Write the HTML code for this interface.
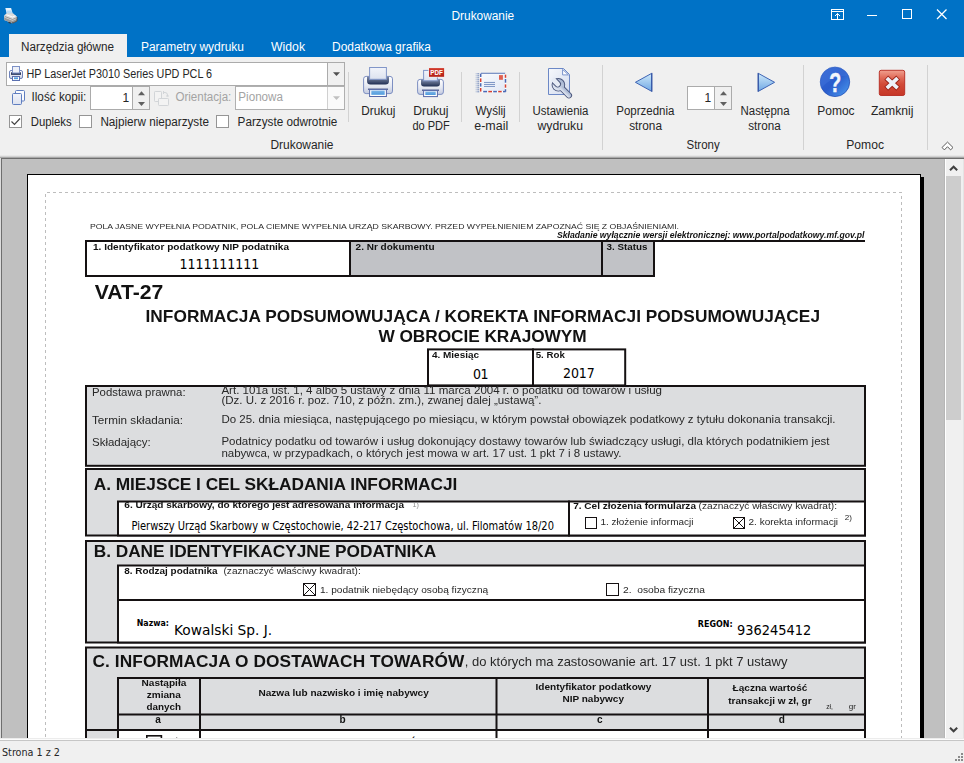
<!DOCTYPE html>
<html lang="pl"><head><meta charset="utf-8"><title>Drukowanie</title>
<style>
html,body{margin:0;padding:0;background:#f0f0f0;overflow:hidden}
svg{display:block}
text{font-family:"Liberation Sans",sans-serif;white-space:pre}
.ui{font-family:"Liberation Sans",sans-serif}
.th{font-family:"DejaVu Sans Condensed","DejaVu Sans","Liberation Sans",sans-serif}
.doc text:not(.th){filter:url(#gs)}
.b{font-weight:bold}
.bi{font-weight:bold;font-style:italic}
</style></head><body>
<svg width="964" height="763" viewBox="0 0 964 763">
<defs><clipPath id="pv"><rect x="2" y="159" width="943" height="579"/></clipPath>

<linearGradient id="gBody" x1="0" y1="0" x2="0" y2="1"><stop offset="0" stop-color="#ffffff"/><stop offset="0.55" stop-color="#e6e9f2"/><stop offset="1" stop-color="#c3cadf"/></linearGradient>
<linearGradient id="gSlot" x1="0" y1="0" x2="0" y2="1"><stop offset="0" stop-color="#7e8bab"/><stop offset="0.6" stop-color="#4b5878"/><stop offset="1" stop-color="#1f2d52"/></linearGradient>
<linearGradient id="gPaper" x1="0" y1="0" x2="0" y2="1"><stop offset="0" stop-color="#f2f4fa"/><stop offset="1" stop-color="#dde2ef"/></linearGradient>
<linearGradient id="gTray" x1="0" y1="0" x2="0" y2="1"><stop offset="0" stop-color="#7bb4e6"/><stop offset="1" stop-color="#4f9bdc"/></linearGradient>
<linearGradient id="gPdf" x1="0" y1="0" x2="0" y2="1"><stop offset="0" stop-color="#d23a2c"/><stop offset="1" stop-color="#b42016"/></linearGradient>
<linearGradient id="gArr" x1="0" y1="0" x2="0" y2="1"><stop offset="0" stop-color="#cfe9fa"/><stop offset="1" stop-color="#6fa8e4"/></linearGradient>
<linearGradient id="gPage" x1="0" y1="0" x2="1" y2="1"><stop offset="0" stop-color="#f6f8fc"/><stop offset="1" stop-color="#d3dbee"/></linearGradient>
<linearGradient id="gClose" x1="0" y1="0" x2="0" y2="1"><stop offset="0" stop-color="#f0a090"/><stop offset="0.3" stop-color="#e06a58"/><stop offset="0.55" stop-color="#d24a38"/><stop offset="1" stop-color="#c63626"/></linearGradient>
<linearGradient id="gHelp" x1="0" y1="0" x2="1" y2="1"><stop offset="0" stop-color="#3466d4"/><stop offset="0.5" stop-color="#2a5ccc"/><stop offset="0.8" stop-color="#3f84e2"/><stop offset="1" stop-color="#5aa4f2"/></linearGradient>
<linearGradient id="gWr" x1="0" y1="0" x2="1" y2="0"><stop offset="0" stop-color="#e4e9f3"/><stop offset="1" stop-color="#a4b3cf"/></linearGradient>
<linearGradient id="gSpeed" x1="0" y1="0" x2="1" y2="0"><stop offset="0" stop-color="#6c86bc" stop-opacity="0"/><stop offset="1" stop-color="#5470ac"/></linearGradient>
<linearGradient id="gEnv" x1="0" y1="0" x2="1" y2="1"><stop offset="0" stop-color="#f8fafd"/><stop offset="1" stop-color="#e2e8f5"/></linearGradient>
<clipPath id="wrHead"><circle cx="0" cy="0" r="6.8"/></clipPath>

<filter id="gs" x="-5%" y="-20%" width="110%" height="140%" color-interpolation-filters="sRGB"><feColorMatrix type="saturate" values="0"/></filter>
</defs>
<rect x="0" y="0" width="964" height="763" fill="#f0f0f0" />
<rect x="0" y="0" width="964" height="57" fill="#0072c6" />
<rect x="9" y="34" width="118" height="24" fill="#f0f0f0" />
<text x="451.5" y="20" font-size="12" textLength="62.7" lengthAdjust="spacingAndGlyphs" class="ui" fill="#fff" >Drukowanie</text>
<text x="21" y="51.3" font-size="12" textLength="93" lengthAdjust="spacingAndGlyphs" class="ui" fill="#262626" >Narzędzia główne</text>
<text x="141" y="51.3" font-size="12" textLength="103" lengthAdjust="spacingAndGlyphs" class="ui" fill="#fff" >Parametry wydruku</text>
<text x="271" y="51.3" font-size="12" textLength="34" lengthAdjust="spacingAndGlyphs" class="ui" fill="#fff" >Widok</text>
<text x="332" y="51.3" font-size="12" textLength="99" lengthAdjust="spacingAndGlyphs" class="ui" fill="#fff" >Dodatkowa grafika</text>
<g fill="none" stroke="#fff" stroke-width="1"><rect x="831.5" y="9.5" width="12" height="10"/><line x1="831" y1="11.5" x2="844" y2="11.5"/><path d="M837.5 19V13.5M835 16l2.5-2.5 2.5 2.5"/><line x1="867" y1="15.5" x2="877" y2="15.5"/><rect x="902.5" y="9.5" width="9" height="9"/><path d="M937 9.5l9.5 9.5M946.5 9.5L937 19" stroke-width="1.3"/></g>
<rect x="6.5" y="62.5" width="338" height="23" fill="#fff" stroke="#ababab"/>
<rect x="328" y="63" width="16" height="22" fill="#f0f0f0" />
<line x1="327.5" y1="63" x2="327.5" y2="85" stroke="#ababab" stroke-width="1" />
<path d="M333 72.2h7l-3.5 3.8z" fill="#505050"/>
<text x="26.5" y="77.5" font-size="12" textLength="185.5" lengthAdjust="spacingAndGlyphs" class="ui" fill="#262626" >HP LaserJet P3010 Series UPD PCL 6</text>
<text x="31.5" y="101.4" font-size="12" textLength="54.8" lengthAdjust="spacingAndGlyphs" class="ui" fill="#262626" >Ilość kopii:</text>
<rect x="90.5" y="86.5" width="59" height="23" fill="#fff" stroke="#ababab"/>
<rect x="133" y="87" width="16" height="22" fill="#f0f0f0" />
<line x1="132.5" y1="87" x2="132.5" y2="109" stroke="#ababab" stroke-width="1" />
<text x="129.3" y="102.2" font-size="12" class="ui" fill="#262626" text-anchor="end" >1</text>
<path d="M138 95.2h7l-3.5-4zM138 102h7l-3.5 4z" fill="#606060"/>
<text x="175.4" y="101.4" font-size="12" textLength="55.9" lengthAdjust="spacingAndGlyphs" class="ui" fill="#a3a3a3" >Orientacja:</text>
<rect x="235.5" y="86.5" width="109" height="23" fill="#fff" stroke="#b0b0b0"/>
<rect x="328" y="87" width="16" height="22" fill="#fafafa" />
<line x1="327.5" y1="87" x2="327.5" y2="109" stroke="#d0d0d0" stroke-width="1" />
<path d="M333 96.2h7l-3.5 3.8z" fill="#c0c0c0"/>
<text x="238.3" y="101.4" font-size="12" textLength="44.7" lengthAdjust="spacingAndGlyphs" class="ui" fill="#a3a3a3" >Pionowa</text>
<rect x="9.5" y="115.5" width="12" height="12" fill="#fff" stroke="#959595"/>
<path d="M11.5 121.5l3 3 5.5-6" fill="none" stroke="#444" stroke-width="1.2"/>
<text x="30.7" y="126.3" font-size="12" textLength="41.0" lengthAdjust="spacingAndGlyphs" class="ui" fill="#262626" >Dupleks</text>
<rect x="79.5" y="115.5" width="12" height="12" fill="#fff" stroke="#959595"/>
<text x="100.4" y="126.3" font-size="12" textLength="108.6" lengthAdjust="spacingAndGlyphs" class="ui" fill="#262626" >Najpierw nieparzyste</text>
<rect x="216.5" y="115.5" width="12" height="12" fill="#fff" stroke="#959595"/>
<text x="237.6" y="126.3" font-size="12" textLength="99.7" lengthAdjust="spacingAndGlyphs" class="ui" fill="#262626" >Parzyste odwrotnie</text>
<text x="270.5" y="149" font-size="12" textLength="63.0" lengthAdjust="spacingAndGlyphs" class="ui" fill="#262626" >Drukowanie</text>
<line x1="348.5" y1="72" x2="348.5" y2="122" stroke="#d2d2d2" stroke-width="1" />
<line x1="461.5" y1="72" x2="461.5" y2="122" stroke="#d2d2d2" stroke-width="1" />
<line x1="519.5" y1="72" x2="519.5" y2="122" stroke="#d2d2d2" stroke-width="1" />
<line x1="602.5" y1="65" x2="602.5" y2="150" stroke="#d2d2d2" stroke-width="1" />
<line x1="803.5" y1="65" x2="803.5" y2="150" stroke="#d2d2d2" stroke-width="1" />
<line x1="927.5" y1="65" x2="927.5" y2="150" stroke="#d2d2d2" stroke-width="1" />
<text x="361.3" y="115.4" font-size="12" textLength="34.0" lengthAdjust="spacingAndGlyphs" class="ui" fill="#262626" >Drukuj</text>
<text x="413.3" y="115.4" font-size="12" textLength="35.2" lengthAdjust="spacingAndGlyphs" class="ui" fill="#262626" >Drukuj</text>
<text x="412.4" y="130" font-size="12" textLength="37.4" lengthAdjust="spacingAndGlyphs" class="ui" fill="#262626" >do PDF</text>
<text x="475.5" y="115.4" font-size="12" textLength="30.2" lengthAdjust="spacingAndGlyphs" class="ui" fill="#262626" >Wyślij</text>
<text x="474.3" y="130" font-size="12" textLength="33.9" lengthAdjust="spacingAndGlyphs" class="ui" fill="#262626" >e-mail</text>
<text x="532.5" y="115.4" font-size="12" textLength="55.9" lengthAdjust="spacingAndGlyphs" class="ui" fill="#262626" >Ustawienia</text>
<text x="537.5" y="130" font-size="12" textLength="45.5" lengthAdjust="spacingAndGlyphs" class="ui" fill="#262626" >wydruku</text>
<text x="616.3" y="115.4" font-size="12" textLength="58.1" lengthAdjust="spacingAndGlyphs" class="ui" fill="#262626" >Poprzednia</text>
<text x="629.2" y="130" font-size="12" textLength="32.8" lengthAdjust="spacingAndGlyphs" class="ui" fill="#262626" >strona</text>
<text x="740.5" y="115.4" font-size="12" textLength="49.0" lengthAdjust="spacingAndGlyphs" class="ui" fill="#262626" >Następna</text>
<text x="748.3" y="130" font-size="12" textLength="32.4" lengthAdjust="spacingAndGlyphs" class="ui" fill="#262626" >strona</text>
<text x="686.5" y="149" font-size="12" textLength="33.2" lengthAdjust="spacingAndGlyphs" class="ui" fill="#262626" >Strony</text>
<text x="817.3" y="115.4" font-size="12" textLength="37.3" lengthAdjust="spacingAndGlyphs" class="ui" fill="#262626" >Pomoc</text>
<text x="870.9" y="115.4" font-size="12" textLength="42.6" lengthAdjust="spacingAndGlyphs" class="ui" fill="#262626" >Zamknij</text>
<text x="846.3" y="149" font-size="12" textLength="37.7" lengthAdjust="spacingAndGlyphs" class="ui" fill="#262626" >Pomoc</text>
<rect x="687.5" y="86.5" width="44" height="23" fill="#fff" stroke="#ababab"/>
<rect x="715" y="87" width="16" height="22" fill="#f0f0f0" />
<line x1="714.5" y1="87" x2="714.5" y2="109" stroke="#ababab" stroke-width="1" />
<text x="711.3" y="102.2" font-size="12" class="ui" fill="#262626" text-anchor="end" >1</text>
<path d="M720 95.2h7l-3.5-4zM720 102h7l-3.5 4z" fill="#606060"/>
<path d="M947.5 142.1L953 147.5L950.6 149.9L947.5 146.7L944.4 149.9L942 147.5Z" fill="#fff" stroke="#5c5c5c" stroke-width="1" stroke-linejoin="round"/>
<g><path d="M5.3 8h5.8l1.6 5.6h-6z" fill="#e8f3fc"/><path d="M6.2 10.5h5.3l0.9 3.1h-5.4z" fill="#b4daf6"/><path d="M4.2 15.5l2.3-2.3h6.5l4 3.5v4.3l-4.5 2.2l-8.3-3.3z" fill="#dcdcdc"/><path d="M4.2 17.5l8.3 3.2l4.5-2v2.3l-4.5 2.2l-8.3-3.3z" fill="#9a9a9a"/><path d="M6.5 14.8l6 2.2l3-1.3" fill="none" stroke="#fff" stroke-width="0.9"/><path d="M17 17v4l-4.5 2.2v-0.8" fill="none" stroke="#4a4a4a" stroke-width="0.9"/><path d="M8.5 22.3l2.5 1" stroke="#3a3a3a" stroke-width="1.2"/><path d="M5 16.6l7.6 2.9l4-1.8" fill="none" stroke="#8c8c8c" stroke-width="0.9"/></g>
<g><rect x="9.5" y="70.5" width="13" height="8" rx="1.5" fill="url(#gBody)" stroke="#6f83bb"/><rect x="11" y="72.3" width="10" height="2.6" fill="#2f3c62"/><rect x="12.5" y="66.5" width="7" height="6.5" fill="#eef1f8" stroke="#7d91c6"/><rect x="12.5" y="76.5" width="7" height="4" fill="#fff" stroke="#5b70b0"/><rect x="14" y="77.4" width="4" height="1.8" fill="#4f9bdc"/></g>
<g><rect x="15.5" y="90.5" width="9" height="10.5" rx="1" fill="#fbfcfe" stroke="#5f7ec0"/><rect x="12.5" y="93.5" width="9" height="11" rx="1" fill="url(#gPaper)" stroke="#5f7ec0"/></g>
<g fill="#f3f3f3" stroke="#d2d5d8"><rect x="154.5" y="91.5" width="7" height="10" rx="0.8"/><rect x="158.5" y="98.5" width="10" height="7" rx="0.8"/><path d="M163.5 92.5h1.5a2.5 2.5 0 0 1 2.5 2.5v1.5M163.5 91v3M166 96h3" fill="none"/></g>
<g transform="translate(362,66)">
<rect x="1.6" y="10.4" width="28.9" height="17.2" rx="2.5" fill="url(#gBody)" stroke="#7d8fc2" stroke-width="1"/>
<path d="M5 10.4h22v4.6a3.5 3.5 0 0 1 -3.5 3.5h-15a3.5 3.5 0 0 1 -3.5 -3.5z" fill="url(#gSlot)"/>
<rect x="7.6" y="1.5" width="16.8" height="11.8" fill="url(#gPaper)" stroke="#8296c8" stroke-width="1"/>
<rect x="6" y="22.6" width="20" height="1.2" fill="#3e4c80"/>
<rect x="7.6" y="23.6" width="16.8" height="6.9" fill="#fff" stroke="#5668a8" stroke-width="1"/>
<rect x="9.3" y="24.6" width="13.4" height="4.2" fill="url(#gTray)"/>
</g>
<g transform="translate(416,66)">
<rect x="1.6" y="13.4" width="25.8" height="15" rx="2.5" fill="url(#gBody)" stroke="#7d8fc2" stroke-width="1"/>
<path d="M5 13.4h19v4a3 3 0 0 1 -3 3h-13a3 3 0 0 1 -3 -3z" fill="url(#gSlot)"/>
<rect x="7.6" y="4.4" width="13.8" height="10.4" fill="url(#gPaper)" stroke="#8296c8" stroke-width="1"/>
<rect x="6" y="23.6" width="17" height="1.2" fill="#3e4c80"/>
<rect x="7.6" y="24.6" width="13.8" height="6" fill="#fff" stroke="#5668a8" stroke-width="1"/>
<rect x="9.3" y="25.6" width="10.4" height="3.4" fill="url(#gTray)"/>
<rect x="12.4" y="1.6" width="16.2" height="9.8" fill="#f6ece8"/>
<rect x="13" y="2.1" width="15.1" height="8.7" fill="url(#gPdf)"/>
<text x="14.2" y="9.1" font-size="6.6" class="b" fill="#fff" textLength="12.6" lengthAdjust="spacingAndGlyphs">PDF</text>
</g>
<g>
<rect x="474.6" y="73.3" width="4.6" height="1" fill="url(#gSpeed)"/>
<rect x="474.6" y="75.3" width="4.6" height="1" fill="url(#gSpeed)"/>
<rect x="474.6" y="77.3" width="4.6" height="1" fill="url(#gSpeed)"/>
<rect x="474.6" y="79.3" width="4.6" height="1" fill="url(#gSpeed)"/>
<rect x="474.6" y="81.3" width="4.6" height="1" fill="url(#gSpeed)"/>
<rect x="474.6" y="83.3" width="4.6" height="1" fill="url(#gSpeed)"/>
<rect x="474.6" y="85.3" width="4.6" height="1" fill="url(#gSpeed)"/>
<rect x="474.6" y="87.3" width="4.6" height="1" fill="url(#gSpeed)"/>
<rect x="474.6" y="89.3" width="4.6" height="1" fill="url(#gSpeed)"/>
<rect x="474.6" y="91.3" width="4.6" height="1" fill="url(#gSpeed)"/>
<rect x="480.6" y="73.5" width="25" height="18.2" rx="1.2" fill="url(#gEnv)" stroke="#ffffff" stroke-width="1.5"/>
<path d="M481 73.3h24.2" stroke="#6f88c0" stroke-width="1.2"/>
<line x1="480.7" y1="73.6" x2="480.7" y2="77" stroke="#4a68b4" stroke-width="1.5"/>
<line x1="480.7" y1="78.4" x2="480.7" y2="82" stroke="#d8402f" stroke-width="1.5"/>
<line x1="480.7" y1="83.2" x2="480.7" y2="86.6" stroke="#4a68b4" stroke-width="1.5"/>
<line x1="480.7" y1="88" x2="480.7" y2="91.6" stroke="#d8402f" stroke-width="1.5"/>
<line x1="505.5" y1="74.6" x2="505.5" y2="77.8" stroke="#d8402f" stroke-width="1.5"/>
<line x1="505.5" y1="78.9" x2="505.5" y2="82.7" stroke="#4a68b4" stroke-width="1.5"/>
<line x1="505.5" y1="84.4" x2="505.5" y2="87.7" stroke="#d8402f" stroke-width="1.5"/>
<line x1="505.5" y1="89.2" x2="505.5" y2="91.8" stroke="#4a68b4" stroke-width="1.5"/>
<line x1="483.2" y1="91.6" x2="487.1" y2="91.6" stroke="#4a68b4" stroke-width="1.5"/>
<line x1="488.3" y1="91.6" x2="492" y2="91.6" stroke="#d8402f" stroke-width="1.5"/>
<line x1="493.2" y1="91.6" x2="496.9" y2="91.6" stroke="#4a68b4" stroke-width="1.5"/>
<line x1="498.2" y1="91.6" x2="501.7" y2="91.6" stroke="#d8402f" stroke-width="1.5"/>
<line x1="503" y1="91.6" x2="505.6" y2="91.6" stroke="#4a68b4" stroke-width="1.5"/>
<rect x="499" y="75.1" width="3.9" height="4.7" fill="#e06050"/>
<rect x="484" y="81.95" width="11" height="0.9" fill="#6f8abf"/>
<rect x="484" y="83.95" width="11" height="0.9" fill="#6f8abf"/>
<rect x="484" y="85.95" width="11" height="0.9" fill="#6f8abf"/>
</g>
<g><path d="M548.5 68.5h15l6 6v20h-21z" fill="url(#gPage)" stroke="#6c88c6" stroke-width="1"/><path d="M562.6 69.4v5.5h5.8z" fill="#fff" stroke="#6c88c6" stroke-width="0.9"/><g transform="translate(558.4,84.8) rotate(-45)"><rect x="-3.1" y="2" width="6.2" height="16" rx="3.1" fill="#48547a"/><circle cx="0" cy="0" r="6.8" fill="#48547a"/><circle cx="0" cy="0" r="5.9" fill="url(#gWr)"/><rect x="-2.2" y="3" width="4.4" height="14.1" rx="2.2" fill="url(#gWr)"/><g clip-path="url(#wrHead)"><path d="M-3.3 -8v7a3.3 3.3 0 0 0 6.6 0v-7z" fill="#48547a"/></g><path d="M-2.4 -8.5v7.5a2.4 2.4 0 0 0 4.8 0v-7.5z" fill="#e6ebf5"/></g></g>
<path d="M635.4 82.3L651.6 73.4V91.3z" fill="url(#gArr)" stroke="#3d63b4" stroke-width="1" stroke-linejoin="round"/>
<path d="M651.9 72.9V91.8" stroke="#2e4fa0" stroke-width="1"/>
<path d="M774.6 82.3L758.4 73.4V91.3z" fill="url(#gArr)" stroke="#3d63b4" stroke-width="1" stroke-linejoin="round"/>
<path d="M758.1 72.9V91.8" stroke="#2e4fa0" stroke-width="1"/>
<circle cx="835" cy="81.9" r="14.7" fill="url(#gHelp)" stroke="#2450b8" stroke-width="0.8"/>
<path d="M821.2 88a15 15 0 0 1 27.6-12.4c-10 0-20 4-27.6 12.4z" fill="#4a7ee0" opacity="0.35"/>
<text x="829.2" y="92.2" font-size="28.5" class="b" fill="#f4f6fb" stroke="#f4f6fb" stroke-width="0.5" textLength="12" lengthAdjust="spacingAndGlyphs">?</text>
<rect x="879.3" y="70.3" width="25.4" height="25.2" rx="1.8" fill="url(#gClose)" stroke="#b62a20" stroke-width="0.9"/>
<path d="M886.2 77.6L898.2 88.8M898.2 77.6L886.2 88.8" stroke="#9c2218" stroke-width="5.6" stroke-linecap="butt" fill="none"/>
<path d="M886.8 78.2L897.6 88.2M897.6 78.2L886.8 88.2" stroke="#edf1f9" stroke-width="3.8" stroke-linecap="butt" fill="none"/>
<rect x="0" y="155" width="964" height="1" fill="#e7e7e7" />
<rect x="0" y="156" width="964" height="1" fill="#d2d2d2" />
<rect x="0" y="157" width="964" height="1" fill="#a8a8a8" />
<rect x="0" y="158" width="964" height="1" fill="#6e6e6e" />
<rect x="0" y="159" width="964" height="579" fill="#c0c0c0" />
<rect x="0" y="158" width="1" height="580" fill="#dcdcdc" />
<rect x="1" y="158" width="1" height="580" fill="#6e6e6e" />
<rect x="944" y="159" width="1" height="579" fill="#b6b6b6" />
<rect x="945" y="159" width="1" height="579" fill="#ffffff" />
<rect x="946" y="159" width="16" height="579" fill="#f0f0f0" />
<rect x="962" y="159" width="1" height="579" fill="#f0f0f0" />
<rect x="963" y="159" width="1" height="579" fill="#e4e4e4" />
<rect x="946" y="176" width="15" height="244" fill="#cdcdcd" />
<path d="M950 170.3l3.6-3.6 3.6 3.6" fill="none" stroke="#404040" stroke-width="2"/>
<path d="M950 727.7l3.6 3.6 3.6-3.6" fill="none" stroke="#404040" stroke-width="2"/>
<g clip-path="url(#pv)" class="doc">
<rect x="921" y="177" width="3" height="570" fill="#000" />
<rect x="27" y="174" width="894" height="570" fill="#000" />
<rect x="28" y="175" width="892" height="570" fill="#fff" />
<line x1="45.5" y1="194" x2="45.5" y2="740" stroke="#bdbdbd" stroke-width="1" stroke-dasharray="3 3"/>
<line x1="901.5" y1="196" x2="901.5" y2="740" stroke="#bdbdbd" stroke-width="1" stroke-dasharray="3 3"/>
<line x1="47" y1="192.5" x2="902" y2="192.5" stroke="#bdbdbd" stroke-width="1" stroke-dasharray="3 3"/>
<text x="90" y="229.2" font-size="7.94" textLength="589" lengthAdjust="spacingAndGlyphs" fill="#2b2728" >POLA JASNE WYPEŁNIA PODATNIK, POLA CIEMNE WYPEŁNIA URZĄD SKARBOWY. PRZED WYPEŁNIENIEM ZAPOZNAĆ SIĘ Z OBJAŚNIENIAMI.</text>
<text x="557" y="238" font-size="8.5" textLength="307.5" lengthAdjust="spacingAndGlyphs" class="bi" fill="#151112" >Składanie wyłącznie wersji elektronicznej: www.portalpodatkowy.mf.gov.pl</text>
<rect x="85" y="240" width="780" height="2" fill="#151112" />
<rect x="86.0" y="241.0" width="264" height="35" fill="#fff" stroke="#151112" stroke-width="2"/>
<rect x="350.0" y="241.0" width="252" height="35" fill="#c1c2c6" stroke="#151112" stroke-width="2"/>
<rect x="602.0" y="241.0" width="52" height="35" fill="#c1c2c6" stroke="#151112" stroke-width="2"/>
<text x="93" y="249.9" font-size="9.15" textLength="196" lengthAdjust="spacingAndGlyphs" class="b" fill="#151112" >1. Identyfikator podatkowy NIP podatnika</text>
<text x="355.6" y="249.9" font-size="9.15" textLength="78.9" lengthAdjust="spacingAndGlyphs" class="b" fill="#151112" >2. Nr dokumentu</text>
<text x="606.5" y="249.9" font-size="9.15" textLength="41.0" lengthAdjust="spacingAndGlyphs" class="b" fill="#151112" >3. Status</text>
<text x="179.6" y="269" font-size="14" textLength="79.6" lengthAdjust="spacing" class="th" fill="#000" >1111111111</text>
<text x="94.7" y="299" font-size="20.2" textLength="68.5" lengthAdjust="spacingAndGlyphs" class="b" fill="#151112" >VAT-27</text>
<text x="145.5" y="322" font-size="17.3" textLength="674.5" lengthAdjust="spacing" class="b" fill="#151112" >INFORMACJA PODSUMOWUJĄCA / KOREKTA INFORMACJI PODSUMOWUJĄCEJ</text>
<text x="378.5" y="342.4" font-size="17.3" textLength="208.2" lengthAdjust="spacing" class="b" fill="#151112" >W OBROCIE KRAJOWYM</text>
<rect x="428.0" y="349.4" width="105" height="36.0" fill="#fff" stroke="#151112" stroke-width="2"/>
<rect x="533.0" y="349.4" width="92.20000000000005" height="36.0" fill="#fff" stroke="#151112" stroke-width="2"/>
<text x="432" y="358" font-size="9.06" textLength="47" lengthAdjust="spacingAndGlyphs" class="b" fill="#151112" >4. Miesiąc</text>
<text x="535.7" y="358" font-size="9.06" textLength="29.1" lengthAdjust="spacingAndGlyphs" class="b" fill="#151112" >5. Rok</text>
<text x="473" y="378.5" font-size="14" textLength="15.4" lengthAdjust="spacing" class="th" fill="#000" >01</text>
<text x="563" y="378" font-size="14" textLength="31.7" lengthAdjust="spacing" class="th" fill="#000" >2017</text>
<rect x="86.0" y="386.0" width="779" height="79.80000000000001" fill="#dcdddf" stroke="#151112" stroke-width="2"/>
<text x="92" y="396.2" font-size="10.52" textLength="93.6" lengthAdjust="spacingAndGlyphs" fill="#2b2728" >Podstawa prawna:</text>
<text x="92" y="423.7" font-size="10.52" textLength="91" lengthAdjust="spacingAndGlyphs" fill="#2b2728" >Termin składania:</text>
<text x="92" y="446" font-size="10.52" textLength="58.7" lengthAdjust="spacingAndGlyphs" fill="#2b2728" >Składający:</text>
<text x="221.4" y="394.4" font-size="10.52" textLength="440.6" lengthAdjust="spacingAndGlyphs" fill="#2b2728" >Art. 101a ust. 1, 4 albo 5 ustawy z dnia 11 marca 2004 r. o podatku od towarów i usług</text>
<text x="221.4" y="404.4" font-size="10.52" textLength="320.0" lengthAdjust="spacingAndGlyphs" fill="#2b2728" >(Dz. U. z 2016 r. poz. 710, z późn. zm.), zwanej dalej „ustawą”.</text>
<text x="221.4" y="423" font-size="10.52" textLength="614.1" lengthAdjust="spacingAndGlyphs" fill="#2b2728" >Do 25. dnia miesiąca, następującego po miesiącu, w którym powstał obowiązek podatkowy z tytułu dokonania transakcji.</text>
<text x="221.4" y="445" font-size="10.52" textLength="608.1" lengthAdjust="spacingAndGlyphs" fill="#2b2728" >Podatnicy podatku od towarów i usług dokonujący dostawy towarów lub świadczący usługi, dla których podatnikiem jest</text>
<text x="221.4" y="457" font-size="10.52" textLength="400.1" lengthAdjust="spacingAndGlyphs" fill="#2b2728" >nabywca, w przypadkach, o których jest mowa w art. 17 ust. 1 pkt 7 i 8 ustawy.</text>
<rect x="86.0" y="469.0" width="779" height="66.5" fill="#dcdddf" stroke="#151112" stroke-width="2"/>
<text x="93.7" y="489.9" font-size="17.3" textLength="363.7" lengthAdjust="spacing" class="b" fill="#151112" >A. MIEJSCE I CEL SKŁADANIA INFORMACJI</text>
<rect x="118.0" y="501.5" width="451" height="34.0" fill="#fff" stroke="#151112" stroke-width="2"/>
<rect x="569.0" y="501.5" width="296" height="34.0" fill="#fff" stroke="#151112" stroke-width="2"/>
<clipPath id="c6"><rect x="119" y="501.4" width="449" height="35"/></clipPath>
<text x="124.3" y="507.8" font-size="9.2" textLength="279.7" lengthAdjust="spacingAndGlyphs" class="b" fill="#151112" clip-path="url(#c6)">6. Urząd skarbowy, do którego jest adresowana informacja</text>
<text x="412.6" y="506.5" font-size="6.59" textLength="6.4" lengthAdjust="spacingAndGlyphs" fill="#8a8a8a" >1)</text>
<text x="131.5" y="529.7" font-size="11.6" textLength="422.5" lengthAdjust="spacingAndGlyphs" class="th" fill="#000" >Pierwszy Urząd Skarbowy w Częstochowie, 42-217 Częstochowa, ul. Filomatów 18/20</text>
<clipPath id="c7"><rect x="570" y="501.4" width="294" height="35"/></clipPath>
<text x="573.2" y="509.1" font-size="9.2" textLength="122.8" lengthAdjust="spacingAndGlyphs" class="b" fill="#151112" clip-path="url(#c7)">7. Cel złożenia formularza</text>
<text x="698.5" y="509.1" font-size="9.24" textLength="138.5" lengthAdjust="spacingAndGlyphs" fill="#2b2728" clip-path="url(#c7)">(zaznaczyć właściwy kwadrat):</text>
<rect x="585.5" y="517.5" width="11" height="11" fill="#fff" stroke="#151112" stroke-width="1"/>
<text x="600.5" y="525.4" font-size="9.15" textLength="92.9" lengthAdjust="spacingAndGlyphs" fill="#2b2728" >1. złożenie informacji</text>
<rect x="733.5" y="517.5" width="11" height="11" fill="#fff" stroke="#151112" stroke-width="1"/>
<path d="M733.5 517.5L744.5 528.5M744.5 517.5L733.5 528.5" stroke="#151112" stroke-width="1" fill="none"/>
<text x="748.5" y="525.4" font-size="9.15" textLength="89.6" lengthAdjust="spacingAndGlyphs" fill="#2b2728" >2. korekta informacji</text>
<text x="844.8" y="519.6" font-size="7.69" textLength="7.2" lengthAdjust="spacingAndGlyphs" fill="#2b2728" >2)</text>
<rect x="86.0" y="541.0" width="779" height="101.5" fill="#dcdddf" stroke="#151112" stroke-width="2"/>
<text x="93.7" y="557" font-size="17.3" textLength="342.6" lengthAdjust="spacing" class="b" fill="#151112" >B. DANE IDENTYFIKACYJNE PODATNIKA</text>
<rect x="118.0" y="565.5" width="747" height="34.5" fill="#fff" stroke="#151112" stroke-width="2"/>
<rect x="118.0" y="600.0" width="747" height="42.5" fill="#fff" stroke="#151112" stroke-width="2"/>
<text x="124.3" y="573.8" font-size="9.15" textLength="93.2" lengthAdjust="spacingAndGlyphs" class="b" fill="#151112" >8. Rodzaj podatnika</text>
<text x="223.5" y="573.8" font-size="9.24" textLength="137.2" lengthAdjust="spacingAndGlyphs" fill="#2b2728" >(zaznaczyć właściwy kwadrat):</text>
<rect x="303.5" y="583.5" width="12" height="12" fill="#fff" stroke="#151112" stroke-width="1"/>
<path d="M303.5 583.5L315.5 595.5M315.5 583.5L303.5 595.5" stroke="#151112" stroke-width="1" fill="none"/>
<text x="319.9" y="593.2" font-size="9.24" textLength="168.3" lengthAdjust="spacingAndGlyphs" fill="#2b2728" >1. podatnik niebędący osobą fizyczną</text>
<rect x="606.5" y="583.5" width="12" height="12" fill="#fff" stroke="#151112" stroke-width="1"/>
<text x="623" y="592.8" font-size="9.24" textLength="82" lengthAdjust="spacingAndGlyphs" fill="#2b2728" >2.  osoba fizyczna</text>
<text x="136.8" y="626.1" font-size="9" textLength="32.1" lengthAdjust="spacingAndGlyphs" class="th b" fill="#000" >Nazwa:</text>
<text x="174.1" y="634.7" font-size="14.6" textLength="98.1" lengthAdjust="spacingAndGlyphs" class="th" fill="#000" >Kowalski Sp. J.</text>
<text x="697.8" y="626.6" font-size="9" textLength="34.8" lengthAdjust="spacingAndGlyphs" class="th b" fill="#000" >REGON:</text>
<text x="737" y="634.9" font-size="14.4" textLength="74.3" lengthAdjust="spacingAndGlyphs" class="th" fill="#000" >936245412</text>
<rect x="86.0" y="647.5" width="779" height="111.5" fill="#dcdddf" stroke="#151112" stroke-width="2"/>
<text x="92.5" y="667" font-size="17.3" textLength="371.8" lengthAdjust="spacing" class="b" fill="#151112" >C. INFORMACJA O DOSTAWACH TOWARÓW</text>
<text x="464.8" y="666.3" font-size="12.6" textLength="322.6" lengthAdjust="spacingAndGlyphs" fill="#2b2728" >, do których ma zastosowanie art. 17 ust. 1 pkt 7 ustawy</text>
<rect x="119" y="731" width="745" height="30" fill="#fff" />
<rect x="118.0" y="678.0" width="747" height="52" fill="#dcdddf" stroke="#151112" stroke-width="2"/>
<rect x="85" y="729" width="781" height="2" fill="#151112" />
<rect x="117" y="713.5" width="749" height="2" fill="#151112" />
<rect x="199" y="677" width="2" height="83" fill="#151112" />
<rect x="495.5" y="677" width="2" height="83" fill="#151112" />
<rect x="707" y="677" width="2" height="83" fill="#151112" />
<rect x="117" y="677" width="2" height="83" fill="#151112" />
<clipPath id="c9"><rect x="119" y="679" width="80" height="36"/></clipPath>
<text x="141.5" y="686" font-size="9.2" textLength="44.8" lengthAdjust="spacingAndGlyphs" class="b" fill="#151112" clip-path="url(#c9)">Nastąpiła</text>
<text x="146.7" y="697.8" font-size="9.2" textLength="34.1" lengthAdjust="spacingAndGlyphs" class="b" fill="#151112" >zmiana</text>
<text x="146.5" y="709.7" font-size="9.2" textLength="34.5" lengthAdjust="spacingAndGlyphs" class="b" fill="#151112" >danych</text>
<text x="158" y="722.6" font-size="10.05" class="b" fill="#151112" text-anchor="middle" >a</text>
<text x="258.5" y="696" font-size="9.2" textLength="170.3" lengthAdjust="spacingAndGlyphs" class="b" fill="#151112" >Nazwa lub nazwisko i imię nabywcy</text>
<text x="342.5" y="722.6" font-size="10.05" class="b" fill="#151112" text-anchor="middle" >b</text>
<text x="535.5" y="689.6" font-size="9.2" textLength="115.8" lengthAdjust="spacingAndGlyphs" class="b" fill="#151112" >Identyfikator podatkowy</text>
<text x="562.5" y="702" font-size="9.2" textLength="61.5" lengthAdjust="spacingAndGlyphs" class="b" fill="#151112" >NIP nabywcy</text>
<text x="599.8" y="722.6" font-size="10.05" class="b" fill="#151112" text-anchor="middle" >c</text>
<text x="732.6" y="691" font-size="9.2" textLength="74.7" lengthAdjust="spacingAndGlyphs" class="b" fill="#151112" >Łączna wartość</text>
<text x="728.3" y="703.6" font-size="9.2" textLength="83.3" lengthAdjust="spacingAndGlyphs" class="b" fill="#151112" >transakcji w zł, gr</text>
<text x="826.2" y="709.4" font-size="7.6" textLength="6.8" lengthAdjust="spacingAndGlyphs" fill="#2b2728" >zł,</text>
<text x="848.8" y="709.4" font-size="7.6" textLength="7.2" lengthAdjust="spacingAndGlyphs" fill="#2b2728" >gr</text>
<text x="781.8" y="722.6" font-size="10.05" class="b" fill="#151112" text-anchor="middle" >d</text>
<rect x="146.8" y="735.8" width="14.6" height="14" fill="#fff" stroke="#151112" stroke-width="1.6"/>
<text x="409.4" y="747.7" font-size="14" class="th" fill="#000" >´</text>
<text x="164" y="744.1" font-size="9.97" textLength="17" lengthAdjust="spacingAndGlyphs" fill="#8a8a8a" >Tak</text>
</g>
<rect x="0" y="738" width="964" height="25" fill="#f0f0f0" />
<rect x="0" y="738" width="964" height="1" fill="#ececec" />
<rect x="0" y="739" width="964" height="1" fill="#fcfcfc" />
<rect x="0" y="740" width="964" height="1" fill="#c6c6c6" />
<text x="2" y="756" font-size="11" textLength="58" lengthAdjust="spacingAndGlyphs" class="th" fill="#262626" >Strona 1 z 2</text>
<rect x="961" y="759" width="2" height="2" fill="#8a8a8a" />
<rect x="958" y="759" width="2" height="2" fill="#8a8a8a" />
<rect x="955" y="759" width="2" height="2" fill="#8a8a8a" />
<rect x="961" y="756" width="2" height="2" fill="#8a8a8a" />
<rect x="958" y="756" width="2" height="2" fill="#8a8a8a" />
<rect x="961" y="753" width="2" height="2" fill="#8a8a8a" />
</svg>
</body></html>
